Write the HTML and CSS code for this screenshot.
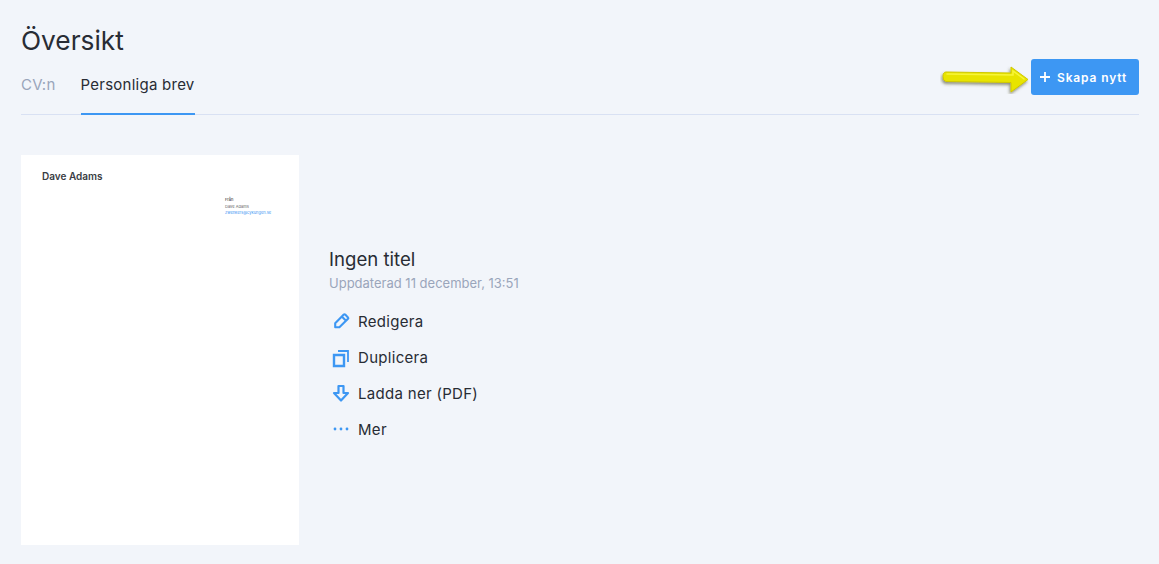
FILE: index.html
```html
<!DOCTYPE html>
<html lang="sv">
<head>
<meta charset="utf-8">
<title>Översikt</title>
<link rel="stylesheet" href="styles.css">
</head>
<body>
<main class="page">
  <header class="head">
    <div class="head-left">
      <h1 class="title">Översikt</h1>
      <nav class="tabs">
        <a class="tab">CV:n</a>
        <a class="tab tab-active">Personliga brev</a>
      </nav>
    </div>
    <div class="cta">
      <svg class="arrow" width="92" height="32" viewBox="0 0 92 32">
        <defs>
          <filter id="sh" x="-10%" y="-30%" width="125%" height="170%"><feDropShadow dx="-1" dy="2" stdDeviation="1.800" flood-color="#4c4c28" flood-opacity=".6"/></filter>
        </defs>
        <path d="M6 10 L71 11 L71 5 L88 17.500 L71 30 L71 20.500 L6 19.500 Q3 19 3 14.500 Q3 10 6 10Z" fill="#e8e400" stroke="#cfc800" stroke-width="1" stroke-linejoin="round" filter="url(#sh)"/>
        <path d="M7 12 L73 13 L73 9 L84 17" fill="none" stroke="#f7f53a" stroke-width="1.500" stroke-linecap="round"/>
      </svg>
      <button class="btn"><svg width="12" height="12" viewBox="0 0 12 12"><path d="M6 1v10M1 6h10" stroke="#fff" stroke-width="1.800"/></svg><span>Skapa nytt</span></button>
    </div>
  </header>
  <section class="doc">
    <div class="sheet">
      <div class="sheet-name">Dave Adams</div>
      <div class="sheet-from">
        <div class="from-label">Från</div>
        <div>Dave Adams</div>
        <div class="from-mail">zwenkers@cykungen.se</div>
      </div>
    </div>
    <div class="info">
      <h2 class="doc-title">Ingen titel</h2>
      <p class="doc-date">Uppdaterad 11 december, 13:51</p>
      <ul class="actions">
        <li class="action"><svg class="ico" width="18" height="18" viewBox="0 0 18 18"><path d="M3.200 11.200 L11.800 2.600 a1 1 0 0 1 1.400 0 L16 5.400 a1 1 0 0 1 0 1.400 L7.400 15.200 H3.200 Z M9.800 4.600 L14 8.800" fill="none" stroke="#3d97f3" stroke-width="2.100" stroke-linejoin="round"/></svg>Redigera</li>
        <li class="action"><svg class="ico" width="18" height="18" viewBox="0 0 18 18"><path d="M2 7h10v11H2z" fill="none" stroke="#3d97f3" stroke-width="2.400"/><path d="M6 3H16V14" fill="none" stroke="#3d97f3" stroke-width="1.800"/></svg>Duplicera</li>
        <li class="action"><svg class="ico" width="18" height="18" viewBox="0 0 18 18"><path d="M6.500 2h5v7h4.500L9 16.500 2 9h4.500z" fill="none" stroke="#3d97f3" stroke-width="2.200" stroke-linejoin="round"/></svg>Ladda ner (PDF)</li>
        <li class="action"><svg class="ico" width="18" height="18" viewBox="0 0 18 18"><circle cx="3" cy="9" r="1.400" fill="#3d97f3"/><circle cx="9" cy="9" r="1.400" fill="#3d97f3"/><circle cx="15" cy="9" r="1.400" fill="#3d97f3"/></svg>Mer</li>
      </ul>
    </div>
  </section>
</main>
</body>
</html>
```
FILE: styles.css
```css
* { box-sizing: border-box; }
html, body { margin: 0; height: 100%; }
body {
  background: #f2f5fa;
  color: #282c34;
  font-family: Inter, "Liberation Sans", sans-serif;
  overflow: hidden;
}
.page { padding: 0 20px 0 21px; }
.head {
  display: flex;
  justify-content: space-between;
  align-items: flex-end;
  height: 115px;
  border-bottom: 1px solid #d9e1f3;
}
.head-left { display: flex; flex-direction: column; }
.title {
  margin: 0;
  padding-top: 22px;
  font-size: 26.300px;
  line-height: 36px;
  font-weight: 400;
}
.tabs { display: flex; gap: 25px; margin-top: 9px; margin-bottom: -1px; }
.tab {
  height: 47px;
  padding-top: 7px;
  font-size: 15px;
  line-height: 20px;
  letter-spacing: .25px;
  color: #9aa5bb;
}
.tab-active {
  color: #282c34;
  border-bottom: 2px solid #3d97f3;
}
.cta { display: flex; align-items: center; margin-bottom: 19px; }
.arrow { margin-right: -1px; margin-top: 1px; }
.btn {
  display: flex;
  align-items: center;
  gap: 6px;
  width: 108px;
  height: 36px;
  padding: 0 0 0 8px;
  border: 0;
  border-radius: 3px;
  background: #3d97f3;
  color: #fff;
  font: 600 12px Inter, "Liberation Sans", sans-serif;
  letter-spacing: .85px;
}
.doc { display: flex; align-items: center; margin-top: 40px; gap: 30px; }
.sheet {
  width: 278px;
  height: 390px;
  background: #fff;
  padding: 15px 21px;
  display: flex;
  flex-direction: column;
}
.sheet-name { font-size: 10px; line-height: 12px; font-weight: 600; color: #3a3d44; }
.sheet-from {
  margin: 15px 0 0 183px;
  font-size: 4px;
  line-height: 6.500px;
  color: #666;
  white-space: nowrap;
}
.from-label { color: #222; }
.from-mail { color: #3d97f3; }
.info { margin-top: -6px; }
.doc-title { margin: 0; font-size: 18.600px; line-height: 24px; font-weight: 400; }
.doc-date { margin: 3px 0 0; font-size: 13px; line-height: 18px; color: #9aa5bb; }
.actions { list-style: none; margin: 11px 0 0; padding: 0; }
.action {
  display: flex;
  align-items: center;
  gap: 8px;
  height: 36px;
  font-size: 15px;
  letter-spacing: .3px;
}
.ico { margin-left: 3px; flex: none; overflow: visible; }
```
